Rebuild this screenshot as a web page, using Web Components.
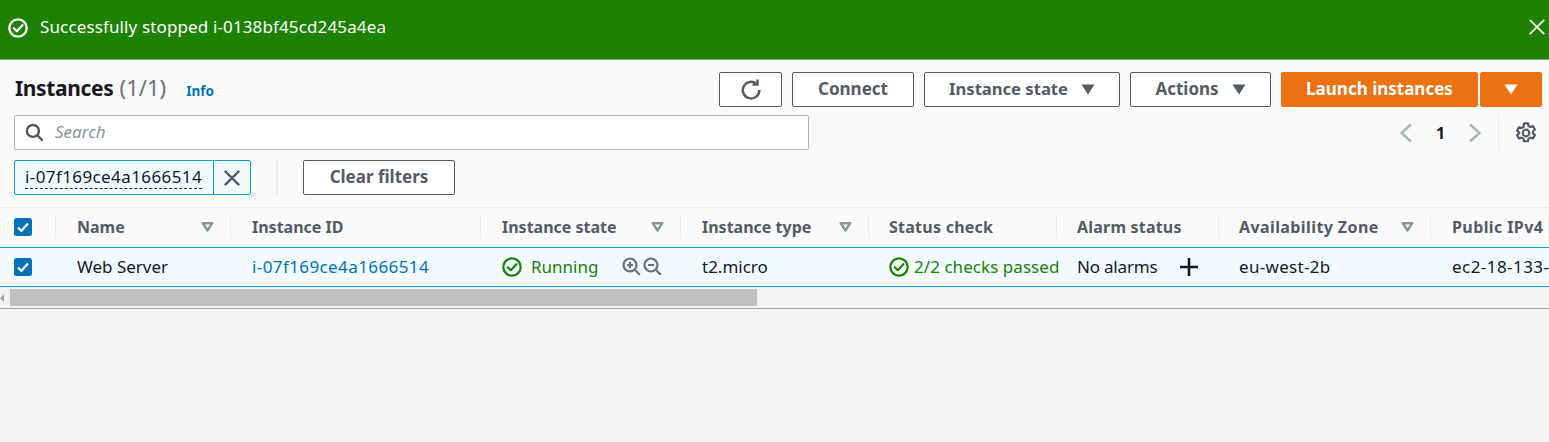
<!DOCTYPE html>
<html><head><meta charset="utf-8"><style>
html,body{margin:0;padding:0;background:#f2f2f2;}
body{font-family:"Noto Sans","Open Sans",sans-serif;width:1549px;height:442px;overflow:hidden;}
</style></head><body>
<ec2-page></ec2-page>
<script>
const ICONS={
check:(s,c,w=2)=>`<svg width="${s}" height="${s}" viewBox="0 0 20 20" fill="none" stroke="${c}" stroke-width="${w}"><circle cx="10" cy="10" r="8.7"/><path d="M5.8 10.2l3 3 5.6-6" stroke-linecap="round" stroke-linejoin="round"/></svg>`,
x:(s,c,w=2)=>`<svg width="${s}" height="${s}" viewBox="0 0 20 20" fill="none" stroke="${c}" stroke-width="${w}"><path d="M2 2l16 16M18 2L2 18"/></svg>`,
filter:`<svg style="display:block" width="13" height="10" viewBox="0 0 13 10" fill="none" stroke="#879596" stroke-width="2.4"><path d="M1.7 1.2h9.6L6.5 8.5z" stroke-linejoin="round"/></svg>`,
tick:`<svg width="18" height="18" viewBox="0 0 18 18"><rect width="18" height="18" rx="2.5" fill="#0073bb"/><path d="M4 9.5l3.4 3.3L14 5.5" fill="none" stroke="#fff" stroke-width="2.2"/></svg>`
};
function def(name,html){customElements.define(name,class extends HTMLElement{constructor(){super();this.attachShadow({mode:'open'}).innerHTML=html;}});}

def('ec2-flash',`<style>
:host{display:flex;align-items:center;height:59px;background:#1d8102;color:#fff;border-bottom:1px solid #7fa878;padding:0 0 0 8px;font-size:17px;box-sizing:content-box}
.t{margin-left:12px;flex:1;letter-spacing:.13px;padding-bottom:6px}
.i{display:flex;padding-bottom:4px}
.c{display:flex;margin-right:3px;padding-bottom:6px}
</style><span class="i">${ICONS.check(20,'#fff',2.3)}</span><span class="t"><slot></slot></span><span class="c">${ICONS.x(18,'#f2f8f0',2.1)}</span>`);

def('ec2-btn',`<style>
:host{display:inline-flex;align-items:center;justify-content:center;box-sizing:border-box;height:35px;border:1px solid #545b64;border-radius:2px;background:#fff;color:#545b64;font-weight:700;font-size:17px;white-space:nowrap;gap:13px}
:host([primary]){background:#ec7211;border-color:#ec7211;color:#fff}
.w{display:flex;align-items:center;gap:13px;padding-bottom:2px}
</style><span class="w"><slot></slot></span>`);

def('ec2-caret',`<style>:host{display:inline-flex;margin-top:2px}</style><svg width="14" height="11" viewBox="0 0 14 11"><path d="M0.5 0.5h13L7 10.5z" fill="currentColor"/></svg>`);

def('ec2-toolbar',`<style>
:host{display:flex;flex-direction:column;padding:12px 7px 0 14px;height:147px;box-sizing:border-box;background:#fafafa}
.r1{display:flex;align-items:center;height:35px}
h1{margin:0 0 4px 1px;font-size:21px;font-weight:700;color:#16191f;line-height:31px;letter-spacing:-.35px}
h1 span{font-weight:400;color:#687078;letter-spacing:0;font-size:22px;margin-left:1px}
.info{color:#0073bb;font-size:13.5px;font-weight:700;margin-left:20px;margin-top:2px}
.sp{flex:1}
.btns{display:flex;gap:10px}
.launch{display:flex;gap:2px}
.r2{display:flex;align-items:center;height:35px;margin-top:8px}
.search{width:795px;height:35px;box-sizing:border-box;border:1px solid #aab7b8;border-radius:2px;background:#fff;display:flex;align-items:center;padding-left:10px;gap:11px;color:#879596;font-style:italic;font-size:17px}
.search span{padding-bottom:2px}
.pager{display:flex;align-items:center;margin-left:auto;margin-right:5px;color:#16191f;height:35px}
.pager .n{font-weight:700;font-size:16px;width:55px;text-align:center;box-sizing:border-box}
.pdiv{width:1px;height:35px;background:#eaeded;margin:0 16px}
.r3{display:flex;align-items:center;margin-top:10px;height:35px}
.tok{display:flex;height:35px;box-sizing:border-box;border:1px solid #00a1c9;border-radius:2px;background:#f1faff;color:#16191f;font-size:17px;width:237px}
.tok .v{width:199px;box-sizing:border-box;padding:0 0 0 10px;border-right:1px solid #00a1c9;line-height:31px;white-space:nowrap;letter-spacing:.4px}
.tok .v span{border-bottom:1px dashed #16191f}
.tok .x{flex:1;display:flex;align-items:center;justify-content:center}
.vd{width:2px;height:35px;background:#eaeded;margin:0 25px 0 25px}
</style>
<div class="r1"><h1>Instances <span>(1/1)</span></h1><span class="info">Info</span><span class="sp"></span>
<div class="btns">
<ec2-btn style="width:63px"><svg style="margin-top:2px" width="22" height="22" viewBox="0 0 22 22" fill="none" stroke="#545b64" stroke-width="2.4"><path d="M16.5 4.8A8.3 8.3 0 1 0 19.4 11"/><path d="M12.5 5.6h5V.6"/></svg></ec2-btn>
<ec2-btn style="width:122px">Connect</ec2-btn>
<ec2-btn style="width:196px"><span style="font-size:16.6px">Instance state</span> <ec2-caret></ec2-caret></ec2-btn>
<ec2-btn style="width:141px">Actions <ec2-caret></ec2-caret></ec2-btn>
<div class="launch"><ec2-btn primary style="width:197px">Launch instances</ec2-btn><ec2-btn primary style="width:62px"><ec2-caret></ec2-caret></ec2-btn></div>
</div></div>
<div class="r2"><div class="search"><svg width="19" height="19" viewBox="0 0 20 20" fill="none" stroke="#545b64" stroke-width="2.6"><circle cx="8.3" cy="8.3" r="6.3"/><path d="M12.8 12.8l5.7 5.7"/></svg><span>Search</span></div>
<div class="pager">
<svg width="14" height="20" viewBox="0 0 14 20" fill="none" stroke="#aab7b8" stroke-width="2.4"><path d="M12 1.5L2.5 10 12 18.5"/></svg>
<span class="n">1</span>
<svg width="14" height="20" viewBox="0 0 14 20" fill="none" stroke="#aab7b8" stroke-width="2.4"><path d="M2 1.5L11.5 10 2 18.5"/></svg>
<span class="pdiv"></span>
<svg width="22" height="22" viewBox="0 0 20 20" fill="none" stroke="#545b64" stroke-width="2"><path d="M8.2 1.2h3.6l.5 2.4 1.7.9 2.3-.8 1.8 3.1-1.8 1.6v1.9l1.8 1.6-1.8 3.1-2.3-.8-1.7.9-.5 2.4H8.2l-.5-2.4-1.7-.9-2.3.8-1.8-3.1 1.8-1.6V9.4L1.9 7.8l1.8-3.1 2.3.8 1.7-.9z" stroke-linejoin="round"/><circle cx="10" cy="10" r="3"/></svg>
</div></div>
<div class="r3"><div class="tok"><div class="v"><span>i-07f169ce4a1666514</span></div><div class="x">${ICONS.x(18,'#545b64',2.6)}</div></div><span class="vd"></span><ec2-btn style="width:152px">Clear filters</ec2-btn></div>`);

def('ec2-cell',`<style>
:host{display:flex;align-items:center;box-sizing:border-box;position:relative;flex:none;white-space:nowrap;padding-left:21px;height:100%;padding-bottom:1px}
:host([head]){font-weight:700;color:#545b64;font-size:16px;padding-bottom:2px}
:host([head]):after{content:"";position:absolute;right:0;top:8px;bottom:8px;width:1px;background:#eaeded}
.f{position:absolute;right:17px;top:14px;display:none}
:host([filter]) .f{display:block}
</style><slot></slot><span class="f">${ICONS.filter}</span>`);

const cols=[56,175,250,200,188,188,162,212,118];
const w=(i,x='')=>`style="width:${cols[i]}px;${x}"`;
def('ec2-table',`<style>
:host{display:block;font-size:17px;color:#16191f;background:#fafafa;overflow:hidden}
.row{display:flex;width:1549px;overflow:hidden;box-sizing:border-box}
.h{height:40px;background:#fafafa;border-top:1px solid #eaeded}
.b{height:40px;background:#f1faff;border-top:1px solid #00a1c9;border-bottom:1px solid #00a1c9;margin-top:0}
.link{color:#0073bb;letter-spacing:.4px}
.ok{color:#1d8102;display:flex;align-items:center;gap:9px}
.ok.s{gap:5px;letter-spacing:.05px}
.zoom{display:flex;gap:2px;margin-left:24px}
.plus{display:flex;margin-left:23px}
.ck{margin-left:-7px;display:flex}
.bar{background:#f2f2f2;border-bottom:1px solid #a9a9a9;display:flex;align-items:flex-start;padding-top:2px;box-sizing:border-box;height:22px;position:relative}
.thumb{width:747px;margin-left:10px;background:#c1c1c1;height:17px}
.arr{position:absolute;left:0;top:7px;width:0;height:0;border:4px solid transparent;border-right-color:#a3a3a3;border-left-width:0}
</style>
<div class="row h">
<ec2-cell head ${w(0)}><span class="ck">${ICONS.tick}</span></ec2-cell>
<ec2-cell head filter ${w(1)}>Name</ec2-cell>
<ec2-cell head ${w(2)}>Instance ID</ec2-cell>
<ec2-cell head filter ${w(3)}>Instance state</ec2-cell>
<ec2-cell head filter ${w(4)}>Instance type</ec2-cell>
<ec2-cell head ${w(5,'padding-left:20px;letter-spacing:.25px')}>Status check</ec2-cell>
<ec2-cell head ${w(6,'padding-left:20px;letter-spacing:.2px')}>Alarm status</ec2-cell>
<ec2-cell head filter ${w(7,'padding-left:20px;letter-spacing:.4px')}>Availability Zone</ec2-cell>
<ec2-cell head ${w(8,'letter-spacing:.4px')}>Public IPv4</ec2-cell>
</div>
<div class="row b">
<ec2-cell ${w(0)}><span class="ck">${ICONS.tick}</span></ec2-cell>
<ec2-cell ${w(1)}>Web Server</ec2-cell>
<ec2-cell ${w(2)}><span class="link">i-07f169ce4a1666514</span></ec2-cell>
<ec2-cell ${w(3)}><span class="ok">${ICONS.check(20,'#1d8102',2.2)}Running</span><span class="zoom">
<svg width="19" height="19" viewBox="0 0 19 19" fill="none" stroke="#687078" stroke-width="2.2"><circle cx="8" cy="8" r="6.5"/><path d="M12.8 12.8l5 5M8 5v6M5 8h6"/></svg>
<svg width="19" height="19" viewBox="0 0 19 19" fill="none" stroke="#687078" stroke-width="2.2"><circle cx="8" cy="8" r="6.5"/><path d="M12.8 12.8l5 5M5 8h6"/></svg></span></ec2-cell>
<ec2-cell ${w(4)}>t2.micro</ec2-cell>
<ec2-cell ${w(5,'padding-left:20px')}><span class="ok s">${ICONS.check(20,'#1d8102',2.2)}2/2 checks passed</span></ec2-cell>
<ec2-cell ${w(6,'padding-left:20px')}><span style="letter-spacing:-.2px">No alarms</span><span class="plus"><svg width="18" height="18" viewBox="0 0 18 18" stroke="#16191f" stroke-width="2.6"><path d="M0 9h18M9 0v18"/></svg></span></ec2-cell>
<ec2-cell ${w(7,'padding-left:20px;letter-spacing:.3px')}>eu-west-2b</ec2-cell>
<ec2-cell ${w(8,'letter-spacing:.45px')}>ec2-18-133-</ec2-cell>
</div>
<div class="bar"><span class="arr"></span><div class="thumb"></div></div>`);

def('ec2-page',`<style>:host{display:block;width:1549px}</style>
<ec2-flash>Successfully stopped i-0138bf45cd245a4ea</ec2-flash><ec2-toolbar></ec2-toolbar><ec2-table></ec2-table>`);
</script></body></html>
